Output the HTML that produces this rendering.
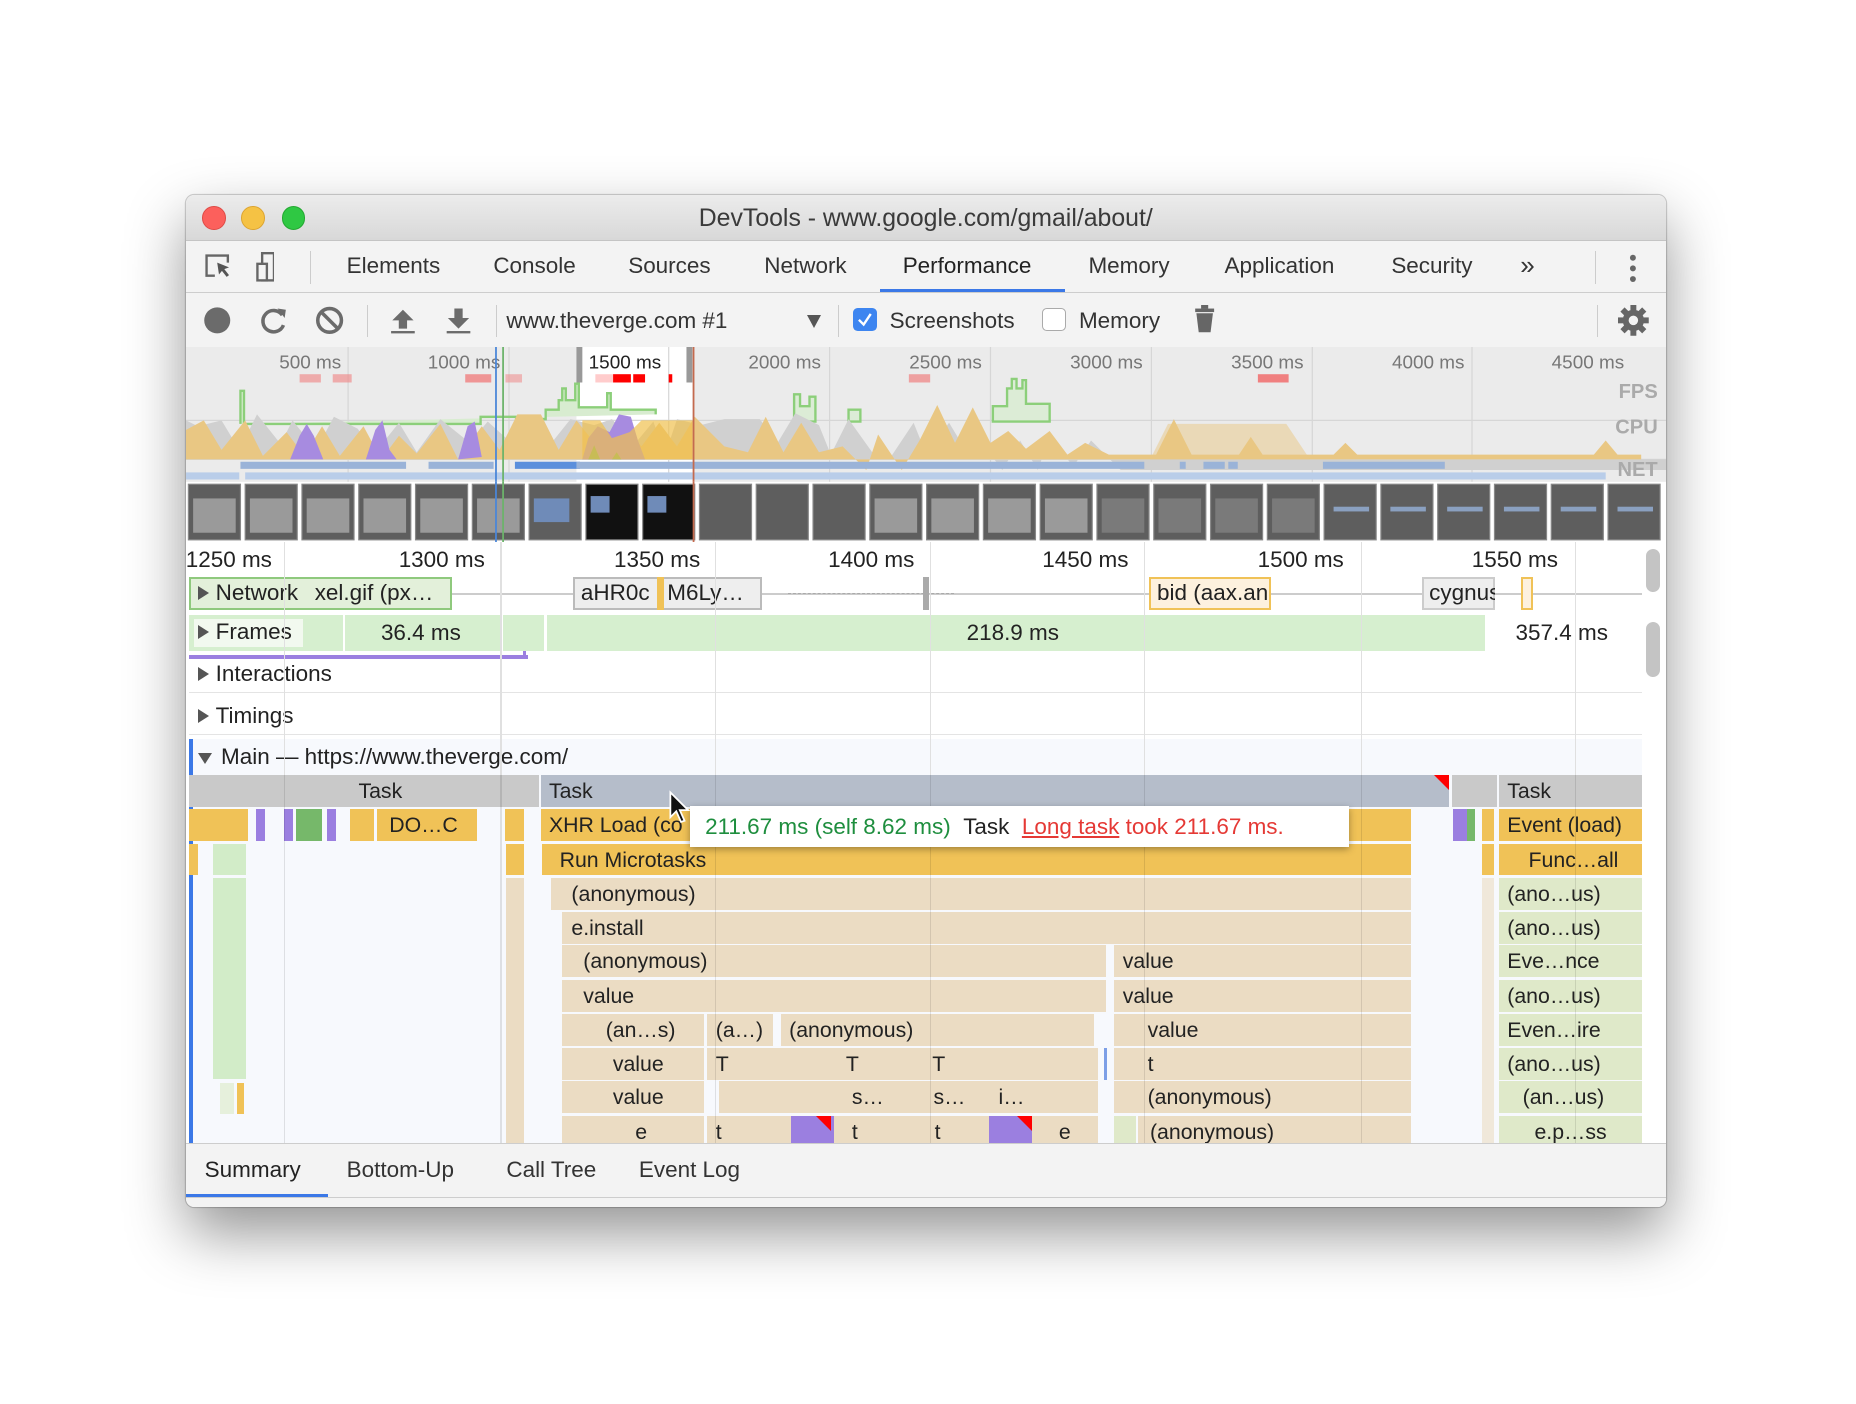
<!DOCTYPE html>
<html><head><meta charset="utf-8">
<style>
html,body{margin:0;padding:0;background:#fff;}
body{width:1569px;height:1187px;zoom:1.1831;position:relative;overflow:hidden;font-family:"Liberation Sans",Arial,sans-serif;color:#333;}
.win{position:absolute;left:157px;top:165px;width:1251px;height:855px;border-radius:7px;overflow:hidden;background:#fff;box-shadow:0 22px 50px rgba(0,0,0,.42),0 0 0 1px rgba(0,0,0,.18);}
.a{position:absolute;}
.title{left:0;top:0;width:1251px;height:38px;background:linear-gradient(#ececec,#d8d8d8);border-bottom:1px solid #c4c4c4;text-align:center;font-size:21px;line-height:40px;color:#3a3a3a;}
.dot{width:20px;height:20px;border-radius:50%;top:9px;}
.tabs{left:0;top:39px;width:1251px;height:43px;background:#f3f3f3;border-bottom:1px solid #cdcdcd;}
.tab{top:10px;font-size:19px;color:#333;}
.tb{left:0;top:83px;width:1251px;height:45px;background:#f3f3f3;border-bottom:1px solid #cdcdcd;}
.sep{width:1px;background:#ccc;}
.lbl{font-size:19px;color:#333;}
.b{position:absolute;height:27px;font-size:18px;line-height:28px;color:#222;white-space:nowrap;overflow:hidden;box-sizing:border-box;padding-left:7px;}
.y{background:#f0c257;}.t{background:#ebdcc3;}.g{background:#dfe9c9;}.lg{background:#d2ecc8;}.p{background:#9b7fe0;}.gr{background:#c9c9c9;}.gb{background:#b5bdca;}
.row{position:absolute;left:3px;width:1228px;font-size:19px;color:#222;}
.tri{display:inline-block;width:0;height:0;border-top:6px solid transparent;border-bottom:6px solid transparent;border-left:10px solid #555;margin-right:6px;}
</style></head><body>
<div class="win">
 <div class="a title">DevTools - www.google.com/gmail/about/</div>
 <div class="a dot" style="left:14px;background:#fc605c;border:1px solid #de4b46;box-sizing:border-box"></div>
 <div class="a dot" style="left:47px;background:#f5c244;border:1px solid #dca431;box-sizing:border-box"></div>
 <div class="a dot" style="left:81px;background:#2fc843;border:1px solid #23a831;box-sizing:border-box"></div>

 <div class="a tabs">
  <svg class="a" style="left:15px;top:9px" width="60" height="26" viewBox="0 0 60 26">
   <path d="M10 20H3V3h18v6" fill="none" stroke="#666" stroke-width="2"/>
   <path d="M12 9l10 4-4 1.5 4 5-2 1.5-4-5-2.5 3z" fill="#555"/>
   <rect x="50" y="1" width="10" height="23" fill="none" stroke="#666" stroke-width="2"/>
   <rect x="46" y="10" width="8" height="14" fill="#f3f3f3" stroke="#666" stroke-width="2"/>
  </svg>
  <div class="a sep" style="left:105px;top:8px;height:28px"></div>
  <div class="a tab" style="left:136px">Elements</div>
  <div class="a tab" style="left:260px">Console</div>
  <div class="a tab" style="left:374px">Sources</div>
  <div class="a tab" style="left:489px">Network</div>
  <div class="a tab" style="left:606px;color:#222">Performance</div>
  <div class="a" style="left:587px;top:40px;width:156px;height:3px;background:#3b78e7"></div>
  <div class="a tab" style="left:763px">Memory</div>
  <div class="a tab" style="left:878px">Application</div>
  <div class="a tab" style="left:1019px">Security</div>
  <div class="a tab" style="left:1128px;font-size:22px;top:7px">»</div>
  <div class="a sep" style="left:1191px;top:8px;height:28px"></div>
  <svg class="a" style="left:1218px;top:10px" width="10" height="26"><circle cx="5" cy="4" r="2.5" fill="#666"/><circle cx="5" cy="13" r="2.5" fill="#666"/><circle cx="5" cy="22" r="2.5" fill="#666"/></svg>
 </div>

 <div class="a tb">
  <svg class="a" style="left:15px;top:10px" width="240" height="26" viewBox="0 0 240 26">
   <circle cx="12" cy="13" r="11" fill="#6b6b6b"/>
   <path d="M67 8.5A9 9 0 1 0 68 17" fill="none" stroke="#6b6b6b" stroke-width="3"/>
   <path d="M63 3l7 1-1 7z" fill="#6b6b6b"/>
   <circle cx="107" cy="13" r="10" fill="none" stroke="#6b6b6b" stroke-width="3"/>
   <path d="M100 6l14 14" stroke="#6b6b6b" stroke-width="3"/>
   <path d="M169 4l-9 9h5.5v7h7v-7h5.5z" fill="#6b6b6b"/><rect x="159" y="22" width="20" height="2" fill="#6b6b6b"/>
   <path d="M216 20l-9-9h5.5V3h7v8h5.5z" fill="#6b6b6b"/><rect x="206" y="22" width="20" height="2" fill="#6b6b6b"/>
  </svg>
  <div class="a sep" style="left:153px;top:10px;height:27px"></div>
  <div class="a sep" style="left:262px;top:10px;height:27px"></div>
  <div class="a lbl" style="left:271px;top:12px">www.theverge.com #1</div>
  <div class="a" style="left:525px;top:18px;border-left:6px solid transparent;border-right:6px solid transparent;border-top:11px solid #555"></div>
  <div class="a sep" style="left:551px;top:10px;height:27px"></div>
  <div class="a" style="left:564px;top:12px;width:20px;height:20px;border-radius:4px;background:#3d85f0"><svg width="20" height="20"><path d="M5 10l4 4 6-9" fill="none" stroke="#fff" stroke-width="2"/></svg></div>
  <div class="a lbl" style="left:595px;top:12px">Screenshots</div>
  <div class="a" style="left:724px;top:12px;width:18px;height:18px;border-radius:4px;background:#fff;border:1px solid #aaa"></div>
  <div class="a lbl" style="left:755px;top:12px">Memory</div>
  <svg class="a" style="left:852px;top:10px" width="18" height="26"><rect x="6" y="0" width="6" height="3" fill="#666"/><rect x="1" y="3" width="16" height="3" fill="#666"/><path d="M2 7h14l-2 16H4z" fill="#666"/></svg>
  <div class="a sep" style="left:1193px;top:10px;height:27px"></div>
  <svg class="a" style="left:1211px;top:10px" width="26" height="26" viewBox="0 0 26 26"><g fill="#666"><circle cx="13" cy="13" r="9"/><rect x="10.5" y="0" width="5" height="26"/><rect x="0" y="10.5" width="26" height="5"/><rect x="10.5" y="0" width="5" height="26" transform="rotate(45 13 13)"/><rect x="10.5" y="0" width="5" height="26" transform="rotate(-45 13 13)"/></g><circle cx="13" cy="13" r="4" fill="#f3f3f3"/></svg>
 </div>

 <!-- overview -->
 <svg class="a" style="left:0;top:128px" width="1251" height="165" viewBox="0 0 1251 165" font-family="Liberation Sans, Arial, sans-serif">
  <rect width="1251" height="165" fill="#ebebeb"/>
  <rect x="330" y="0" width="98" height="115" fill="#fff"/>
  <g stroke="#d6d6d6" stroke-width="1">
   <line x1="137" y1="0" x2="137" y2="115"/><line x1="273" y1="0" x2="273" y2="115"/><line x1="408" y1="0" x2="408" y2="115"/><line x1="544" y1="0" x2="544" y2="115"/><line x1="680" y1="0" x2="680" y2="115"/><line x1="816" y1="0" x2="816" y2="115"/><line x1="952" y1="0" x2="952" y2="115"/><line x1="1087" y1="0" x2="1087" y2="115"/>
   <line x1="0" y1="62" x2="1251" y2="62"/><line x1="0" y1="95" x2="1251" y2="95"/>
  </g>
  <g font-size="16" fill="#777" text-anchor="middle">
   <text x="105" y="18">500 ms</text><text x="235" y="18">1000 ms</text><text x="371" y="18" fill="#222">1500 ms</text><text x="506" y="18">2000 ms</text><text x="642" y="18">2500 ms</text><text x="778" y="18">3000 ms</text><text x="914" y="18">3500 ms</text><text x="1050" y="18">4000 ms</text><text x="1185" y="18">4500 ms</text>
  </g>
  <g fill="#f08080"><rect x="96" y="23" width="18" height="7" opacity=".6"/><rect x="124" y="23" width="16" height="7" opacity=".6"/><rect x="236" y="23" width="22" height="7" opacity=".8"/><rect x="270" y="23" width="14" height="7" opacity=".5"/><rect x="611" y="23" width="18" height="7" opacity=".7"/><rect x="906" y="23" width="26" height="7"/></g>
  <g fill="#f00"><rect x="346" y="23" width="30" height="7" opacity=".2"/><rect x="361" y="23" width="15" height="7"/><rect x="378" y="23" width="10" height="7"/><rect x="408" y="23" width="3" height="7"/></g>
  <rect x="330" y="0" width="5" height="30" fill="#999"/><rect x="423" y="0" width="5" height="30" fill="#999"/>
  <path d="M46 65V37h3v28h200v-6h30v2h25v-8h11v-8h3v-10h3v10h8v-14h3v20h24v-12h3v14h38v4" fill="#d8ecd0" stroke="#8ccf7a" stroke-width="2"/>
  <path d="M514 63V40h5v10h8v-8h5v21zM560 63v-10h10v10zM682 63V50h12V35h4v-8h4v8h5V28h3v20h20v15z" fill="#dcecd6" stroke="#8ccf7a" stroke-width="2"/>
  <path d="M0 95V62l10 5 20-5 15 25 15-30 20 25 10-20 20 25 15-28 20 10 15 20 20-25 15 25 20-28 25 20 15-18 20 18 15-20 15 25 20-25 20 5 15-5 20 20 15-18 10 28 10-30 20 5 20-5h30l15 20 15-25 20 10 10 25 15-30 20 28 15 5 20-30 10 25 20-25 15 25 15-5 15 20 15-25 15 25 10-28 20 25 15-22 25 25 H1251V95z" fill="#d0d0d0"/>
  <path d="M0 95V70l15-8 15 25 20-25 15 30 20-20 15 20 15-25 15 25 20-25 15 28 15-20 15 15 20-25 15 30 20-28 15 20 15-30h20l15 30 15-25 20 25 15-25 20 22 15-20 15 20 15-25 10 10 15 15 20 5 15-30 15 30 15-25 15 25 20-5 20 20 10-30 20 30 15-25 15-30 15 32 15-30 15 30 15-10 15 15 20-15 15 20 15-10 20 10h40l15-30 15 30h40l10-15 10 15h60l10-10 10 10h200l10-12 10 12h20V95z" fill="#e9c783"/>
  <path d="M88 95l8-20 6-10 6 10 8 20zM152 95l8-25 6-8 6 25 6 8zM230 95l8-28 6-4 6 30zM335 95l5-18 8-10 10 5 8-15 10 2 6 20 6 16z" fill="#a78be0"/>
  <path d="M340 95l5-12 5 12zM360 95l4-6 4 6z" fill="#6cb36a"/>
  <path d="M335 95V62h15l10 15 15-5 10-10h43v33z" fill="#f0c04f" opacity=".7"/>
  <path d="M815 95l15-30h100l20 30z" fill="#e9c783" opacity=".5"/>
  <g fill="#9ab3d8"><rect x="46" y="97" width="140" height="6"/><rect x="205" y="97" width="55" height="6"/><rect x="278" y="97" width="55" height="6" fill="#5b8fdc"/><rect x="330" y="97" width="480" height="6"/><rect x="840" y="97" width="5" height="6"/><rect x="860" y="97" width="18" height="6"/><rect x="881" y="97" width="8" height="6"/><rect x="961" y="97" width="103" height="6"/>
   <rect x="0" y="106" width="45" height="6" fill="#b9cde9"/><rect x="50" y="106" width="1150" height="6" fill="#b9cde9"/></g>
  <g font-size="17" font-weight="bold" fill="#aaa" text-anchor="end"><text x="1244" y="43">FPS</text><text x="1244" y="73">CPU</text><text x="1244" y="109">NET</text></g>
  <line x1="262" y1="0" x2="262" y2="165" stroke="#4a86d8" stroke-width="1.5"/>
  <line x1="268" y1="0" x2="268" y2="165" stroke="#6cb36a" stroke-width="1.5"/>
  <line x1="429" y1="0" x2="429" y2="165" stroke="#c46a4e" stroke-width="1.5"/>
  <rect x="0" y="114" width="1251" height="51" fill="#fff"/>
  <g fill="#5e5e5e" stroke="#888" stroke-width="1">
   <rect x="2" y="116" width="44" height="47"/><rect x="50" y="116" width="44" height="47"/><rect x="98" y="116" width="44" height="47"/><rect x="146" y="116" width="44" height="47"/><rect x="194" y="116" width="44" height="47"/><rect x="242" y="116" width="44" height="47"/><rect x="290" y="116" width="44" height="47"/><rect x="338" y="116" width="44" height="47" fill="#111"/><rect x="386" y="116" width="44" height="47" fill="#111"/><rect x="434" y="116" width="44" height="47"/><rect x="482" y="116" width="44" height="47"/><rect x="530" y="116" width="44" height="47"/><rect x="578" y="116" width="44" height="47"/><rect x="626" y="116" width="44" height="47"/><rect x="674" y="116" width="44" height="47"/><rect x="722" y="116" width="44" height="47"/><rect x="770" y="116" width="44" height="47"/><rect x="818" y="116" width="44" height="47"/><rect x="866" y="116" width="44" height="47"/><rect x="914" y="116" width="44" height="47"/><rect x="962" y="116" width="44" height="47"/><rect x="1010" y="116" width="44" height="47"/><rect x="1058" y="116" width="44" height="47"/><rect x="1106" y="116" width="44" height="47"/><rect x="1154" y="116" width="44" height="47"/><rect x="1202" y="116" width="44" height="47"/>
  </g>
  <g fill="#9a9a9a">
   <rect x="6" y="128" width="36" height="29"/><rect x="54" y="128" width="36" height="29"/><rect x="102" y="128" width="36" height="29"/><rect x="150" y="128" width="36" height="29"/><rect x="198" y="128" width="36" height="29"/><rect x="246" y="128" width="36" height="29"/><rect x="582" y="128" width="36" height="29"/><rect x="630" y="128" width="36" height="29"/><rect x="678" y="128" width="36" height="29"/><rect x="726" y="128" width="36" height="29"/>
  </g>
  <g fill="#7a7a7a"><rect x="774" y="128" width="36" height="29"/><rect x="822" y="128" width="36" height="29"/><rect x="870" y="128" width="36" height="29"/><rect x="918" y="128" width="36" height="29"/></g>
  <g fill="#8aa0c0"><rect x="970" y="135" width="30" height="4"/><rect x="1018" y="135" width="30" height="4"/><rect x="1066" y="135" width="30" height="4"/><rect x="1114" y="135" width="30" height="4"/><rect x="1162" y="135" width="30" height="4"/><rect x="1210" y="135" width="30" height="4"/></g>
  <g fill="#6f8bb8"><rect x="294" y="128" width="30" height="20"/><rect x="342" y="126" width="16" height="14"/><rect x="390" y="126" width="16" height="14"/></g>
  <line x1="262" y1="114" x2="262" y2="165" stroke="#4a86d8" stroke-width="1.5"/>
  <line x1="268" y1="114" x2="268" y2="165" stroke="#6cb36a" stroke-width="1.5"/>
  <line x1="429" y1="114" x2="429" y2="165" stroke="#c46a4e" stroke-width="1.5"/>
 </svg>

 <!-- ruler & tracks -->
 <div class="a" style="left:0;top:293px;width:1251px;height:508px;background:#fff"></div>
 <div class="a" style="left:3px;top:460px;width:1228px;height:341px;background:#f7f9fd"></div>
 <div class="a" style="left:3px;top:460px;width:3px;height:341px;background:#3b78e7"></div>
 <div class="a" style="left:0;top:293px;width:1251px;font-size:19px;color:#222">
  <div class="a" style="left:0;top:4px">1250 ms</div>
  <div class="a" style="left:180px;top:4px">1300 ms</div>
  <div class="a" style="left:362px;top:4px">1350 ms</div>
  <div class="a" style="left:543px;top:4px">1400 ms</div>
  <div class="a" style="left:724px;top:4px">1450 ms</div>
  <div class="a" style="left:906px;top:4px">1500 ms</div>
  <div class="a" style="left:1087px;top:4px">1550 ms</div>
 </div>
 <!-- network row -->
 <div class="a" style="left:3px;top:336px;width:1228px;height:2px;background:#ccc"></div>
 <div class="a" style="left:3px;top:323px;width:222px;height:28px;background:#e3f0da;border:2px solid #8fc97d;box-sizing:border-box"></div>
 <div class="a" style="left:327px;top:323px;width:160px;height:28px;background:#eee;border:2px solid #bbb;box-sizing:border-box"></div>
 <div class="a" style="left:398px;top:323px;width:6px;height:28px;background:#f0c257"></div>
 <div class="a" style="left:814px;top:323px;width:103px;height:28px;background:#fdf1de;border:2px solid #f0c257;box-sizing:border-box"></div>
 <div class="a" style="left:1045px;top:323px;width:62px;height:28px;background:#eee;border:2px solid #ccc;box-sizing:border-box"></div>
 <div class="a" style="left:1129px;top:323px;width:10px;height:28px;background:#fdf1de;border:2px solid #f0c257;box-sizing:border-box"></div>
 <div class="a" style="left:623px;top:323px;width:5px;height:28px;background:#aaa"></div>
 <div class="a" style="left:509px;top:336px;width:140px;height:1px;border-top:1px dashed #aaa"></div>
 <div class="row" style="top:325px;left:10px"><span class="tri"></span>Network</div>
 <div class="a" style="left:109px;top:325px;font-size:19px;color:#222">xel.gif (px…</div>
 <div class="a" style="left:334px;top:325px;font-size:19px;color:#222">aHR0c</div>
 <div class="a" style="left:407px;top:325px;font-size:19px;color:#222">M6Ly…</div>
 <div class="a" style="left:821px;top:325px;font-size:19px;color:#222;width:93px;overflow:hidden;white-space:nowrap">bid (aax.an</div>
 <div class="a" style="left:1051px;top:325px;font-size:19px;color:#222;width:56px;overflow:hidden">cygnus</div>
 <!-- frames -->
 <div class="a" style="left:3px;top:355px;width:1095px;height:30px;background:#d6efcf"></div>
 <div class="a" style="left:133px;top:355px;width:2px;height:30px;background:#fff"></div>
 <div class="a" style="left:266px;top:355px;width:2px;height:30px;background:#fff"></div>
 <div class="a" style="left:303px;top:355px;width:2px;height:30px;background:#fff"></div>
 <div class="a" style="left:7px;top:358px;width:92px;height:24px;background:#f2f9ef"></div>
 <div class="row" style="top:358px;left:10px"><span class="tri"></span>Frames</div>
 <div class="a" style="left:165px;top:359px;font-size:19px;color:#222">36.4 ms</div>
 <div class="a" style="left:660px;top:359px;font-size:19px;color:#222">218.9 ms</div>
 <div class="a" style="left:1124px;top:359px;font-size:19px;color:#222">357.4 ms</div>
 <div class="a" style="left:3px;top:389px;width:286px;height:3px;background:#9b7fe0"></div>
 <div class="a" style="left:285px;top:385px;width:3px;height:7px;background:#9b7fe0"></div>
 <div class="a" style="left:3px;top:420px;width:1228px;height:1px;background:#e4e4e4"></div>
 <div class="a" style="left:3px;top:455px;width:1228px;height:1px;background:#e4e4e4"></div>
 <div class="row" style="top:394px;left:10px"><span class="tri"></span>Interactions</div>
 <div class="row" style="top:429px;left:10px"><span class="tri"></span>Timings</div>
 <div class="row" style="top:464px;left:10px"><span class="tri" style="border-left:6px solid transparent;border-right:6px solid transparent;border-top:10px solid #555;border-bottom:0;margin-right:8px"></span>Main — https://www.theverge.com/</div>

 <!-- flame -->
 <div class="a" style="left:3px;top:490px;width:1228px;height:311px;overflow:hidden">
  <div class="b gr" style="left:0;top:0;width:296px"></div>
  <div class="b gr" style="left:136px;top:0;width:100px">Task</div>
  <div class="b gb" style="left:297px;top:0;width:768px">Task</div>
  <div class="a" style="left:1052px;top:0;width:0;height:0;border-top:13px solid #f00;border-left:13px solid transparent"></div>
  <div class="b gr" style="left:1067px;top:0;width:38px"></div>
  <div class="b gr" style="left:1107px;top:0;width:121px">Task</div>
  <div class="b y" style="left:0;top:29px;width:50px"></div>
  <div class="b p" style="left:56px;top:29px;width:8px"></div><div class="b p" style="left:80px;top:29px;width:8px"></div>
  <div class="b" style="left:90px;top:29px;width:22px;background:#76b86a"></div>
  <div class="b p" style="left:116px;top:29px;width:8px"></div>
  <div class="b y" style="left:136px;top:29px;width:20px"></div>
  <div class="b y" style="left:159px;top:29px;width:84px;padding-left:10px">DO…C</div>
  <div class="b y" style="left:267px;top:29px;width:16px"></div>
  <div class="b y" style="left:297px;top:29px;width:736px">XHR Load (co</div>
  <div class="b p" style="left:1068px;top:29px;width:12px"></div><div class="b" style="left:1080px;top:29px;width:5px;background:#76b86a"></div>
  <div class="b y" style="left:1093px;top:29px;width:10px"></div>
  <div class="b y" style="left:1107px;top:29px;width:121px">Event (load)</div>
  <div class="b y" style="left:0;top:58px;width:4px"></div>
  <div class="b lg" style="left:20px;top:58px;width:28px"></div>
  <div class="b y" style="left:268px;top:58px;width:15px"></div>
  <div class="b y" style="left:298px;top:58px;width:735px;padding-left:15px">Run Microtasks</div>
  <div class="b y" style="left:1093px;top:58px;width:10px"></div>
  <div class="b y" style="left:1107px;top:58px;width:121px;padding-left:25px">Func…all</div>
  <div class="a lg" style="left:20px;top:87px;width:28px;height:170px"></div>
  <div class="a" style="left:26px;top:260px;width:12px;height:27px;background:#e6f0dc"></div>
  <div class="a y" style="left:40px;top:260px;width:6px;height:27px"></div>
  <div class="a t" style="left:268px;top:87px;width:15px;height:224px"></div>
  <div class="a t" style="left:1093px;top:87px;width:10px;height:224px;opacity:.6"></div>
  <div class="b t" style="left:306px;top:87px;width:727px;padding-left:17px">(anonymous)</div>
  <div class="b g" style="left:1107px;top:87px;width:121px">(ano…us)</div>
  <div class="b t" style="left:315px;top:116px;width:718px;padding-left:8px">e.install</div>
  <div class="b g" style="left:1107px;top:116px;width:121px">(ano…us)</div>
  <div class="b t" style="left:315px;top:144px;width:460px;padding-left:18px">(anonymous)</div>
  <div class="b t" style="left:782px;top:144px;width:251px">value</div>
  <div class="b g" style="left:1107px;top:144px;width:121px">Eve…nce</div>
  <div class="b t" style="left:315px;top:173px;width:460px;padding-left:18px">value</div>
  <div class="b t" style="left:782px;top:173px;width:251px">value</div>
  <div class="b g" style="left:1107px;top:173px;width:121px">(ano…us)</div>
  <div class="b t" style="left:315px;top:202px;width:120px;padding-left:37px">(an…s)</div>
  <div class="b t" style="left:438px;top:202px;width:55px">(a…)</div>
  <div class="b t" style="left:500px;top:202px;width:265px">(anonymous)</div>
  <div class="b t" style="left:782px;top:202px;width:251px;padding-left:28px">value</div>
  <div class="b g" style="left:1107px;top:202px;width:121px">Even…ire</div>
  <div class="b t" style="left:315px;top:231px;width:120px;padding-left:43px">value</div>
  <div class="b t" style="left:438px;top:231px;width:330px;padding-left:7px">T</div>
  <div class="a" style="left:555px;top:231px;font-size:18px;line-height:28px;color:#222">T</div>
  <div class="a" style="left:628px;top:231px;font-size:18px;line-height:28px;color:#222">T</div>
  <div class="a" style="left:773px;top:231px;width:3px;height:27px;background:#7d9fe6"></div>
  <div class="b t" style="left:782px;top:231px;width:251px;padding-left:28px">t</div>
  <div class="b g" style="left:1107px;top:231px;width:121px">(ano…us)</div>
  <div class="b t" style="left:315px;top:259px;width:120px;padding-left:43px">value</div>
  <div class="b t" style="left:448px;top:259px;width:320px"></div>
  <div class="a" style="left:560px;top:259px;font-size:18px;line-height:28px;color:#222">s…</div>
  <div class="a" style="left:629px;top:259px;font-size:18px;line-height:28px;color:#222">s…</div>
  <div class="a" style="left:684px;top:259px;font-size:18px;line-height:28px;color:#222">i…</div>
  <div class="b t" style="left:782px;top:259px;width:251px;padding-left:28px">(anonymous)</div>
  <div class="b g" style="left:1107px;top:259px;width:121px;padding-left:20px">(an…us)</div>
  <div class="b t" style="left:315px;top:288px;width:120px;padding-left:62px">e</div>
  <div class="b t" style="left:438px;top:288px;width:330px;padding-left:7px">t</div>
  <div class="b p" style="left:509px;top:288px;width:36px"></div>
  <div class="a" style="left:530px;top:288px;width:0;height:0;border-top:13px solid #f00;border-left:13px solid transparent"></div>
  <div class="a" style="left:560px;top:288px;font-size:18px;line-height:28px;color:#222">t</div>
  <div class="a" style="left:630px;top:288px;font-size:18px;line-height:28px;color:#222">t</div>
  <div class="b p" style="left:676px;top:288px;width:36px"></div>
  <div class="a" style="left:700px;top:288px;width:0;height:0;border-top:13px solid #f00;border-left:13px solid transparent"></div>
  <div class="a" style="left:735px;top:288px;font-size:18px;line-height:28px;color:#222">e</div>
  <div class="b g" style="left:782px;top:288px;width:18px"></div>
  <div class="b t" style="left:802px;top:288px;width:231px;padding-left:10px">(anonymous)</div>
  <div class="b g" style="left:1107px;top:288px;width:121px;padding-left:30px">e.p…ss</div>
  <div class="a" style="left:80px;top:0;width:1px;height:311px;background:rgba(0,0,0,.1)"></div>
  <div class="a" style="left:263px;top:0;width:1px;height:311px;background:rgba(0,0,0,.1)"></div>
  <div class="a" style="left:444px;top:0;width:1px;height:311px;background:rgba(0,0,0,.1)"></div>
  <div class="a" style="left:626px;top:0;width:1px;height:311px;background:rgba(0,0,0,.1)"></div>
  <div class="a" style="left:807px;top:0;width:1px;height:311px;background:rgba(0,0,0,.1)"></div>
  <div class="a" style="left:990px;top:0;width:1px;height:311px;background:rgba(0,0,0,.1)"></div>
  <div class="a" style="left:1171px;top:0;width:1px;height:311px;background:rgba(0,0,0,.1)"></div>
 </div>
 <div class="a" style="left:83px;top:293px;width:1px;height:197px;background:#e0e0e0"></div>
 <div class="a" style="left:266px;top:293px;width:1px;height:197px;background:#e0e0e0"></div>
 <div class="a" style="left:447px;top:293px;width:1px;height:197px;background:#e0e0e0"></div>
 <div class="a" style="left:629px;top:293px;width:1px;height:197px;background:#e0e0e0"></div>
 <div class="a" style="left:810px;top:293px;width:1px;height:197px;background:#e0e0e0"></div>
 <div class="a" style="left:993px;top:293px;width:1px;height:197px;background:#e0e0e0"></div>
 <div class="a" style="left:1174px;top:293px;width:1px;height:197px;background:#e0e0e0"></div>
 <div class="a" style="left:1234px;top:299px;width:12px;height:36px;border-radius:6px;background:#c4c4c4"></div>
 <div class="a" style="left:1234px;top:361px;width:12px;height:46px;border-radius:6px;background:#c4c4c4"></div>

 <div class="a" style="left:426px;top:516px;width:557px;height:35px;background:#fff;box-shadow:0 2px 6px rgba(0,0,0,.35);font-size:19px;line-height:35px;white-space:nowrap;padding-left:13px;box-sizing:border-box">
  <span style="color:#1e8e3e">211.67 ms (self 8.62 ms)</span> <span style="color:#222">&nbsp;Task&nbsp;</span> <span style="color:#e53935;text-decoration:underline">Long task</span><span style="color:#e53935"> took 211.67 ms.</span>
 </div>
 <svg class="a" style="left:408px;top:503px" width="20" height="30"><path d="M2 2v21l5-5 4 9 3-1-4-9h7z" fill="#111" stroke="#fff" stroke-width="1.5"/></svg>

 <div class="a" style="left:0;top:801px;width:1251px;height:54px;background:#f3f3f3;border-top:1px solid #cdcdcd"></div>
 <div class="a" style="left:0;top:847px;width:1251px;height:1px;background:#cdcdcd"></div>
 <div class="a tab" style="left:16px;top:813px;color:#222">Summary</div>
 <div class="a" style="left:0;top:844px;width:120px;height:3px;background:#3b78e7"></div>
 <div class="a tab" style="left:136px;top:813px">Bottom-Up</div>
 <div class="a tab" style="left:271px;top:813px">Call Tree</div>
 <div class="a tab" style="left:383px;top:813px">Event Log</div>
</div>
</body></html>
